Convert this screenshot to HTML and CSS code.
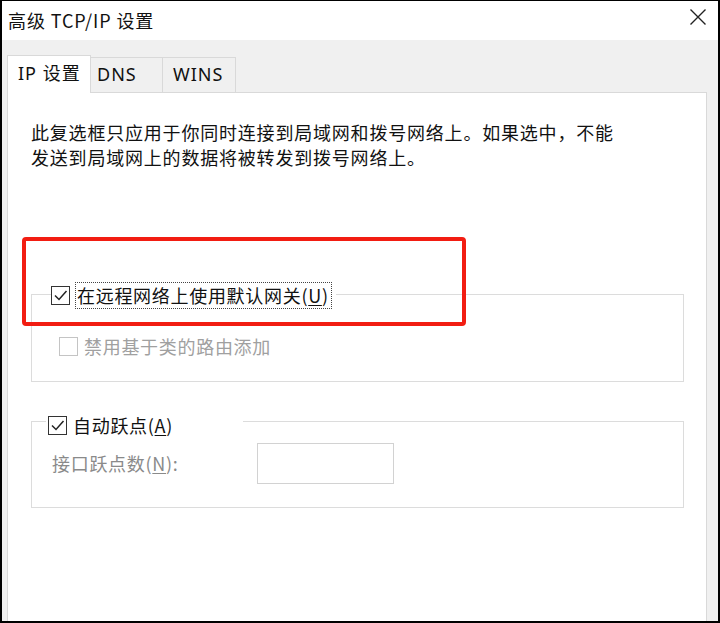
FILE: index.html
```html
<!DOCTYPE html>
<html lang="zh-CN">
<head>
<meta charset="utf-8">
<title>高级 TCP/IP 设置</title>
<link rel="stylesheet" href="styles.css">
</head>
<body>
<div class="window">
  <div class="titlebar">
    <span class="title">高级 TCP/IP 设置</span>
    <svg class="close" width="18" height="18" viewBox="0 0 18 18"><path d="M1.5 1.5 L16.5 16.5 M16.5 1.5 L1.5 16.5" stroke="#222" stroke-width="1.4" fill="none"/></svg>
  </div>
  <div class="body">
    <div class="tabs">
      <div class="tab tab-active">IP 设置</div>
      <div class="tab tab-dns">DNS</div>
      <div class="tab tab-wins">WINS</div>
    </div>
    <div class="panel">
      <p class="note">此复选框只应用于你同时连接到局域网和拨号网络上。如果选中，不能<br>发送到局域网上的数据将被转发到拨号网络上。</p>
      <fieldset class="group group-gateway">
        <legend class="legend legend-gateway">
          <span class="check"><svg width="19" height="19" viewBox="0 0 19 19"><path d="M4 9.5 L8 13.5 L15.5 5" stroke="#222" stroke-width="1.5" fill="none"/></svg></span>
          <span class="focus-label">在远程网络上使用默认网关(<u>U</u>)</span>
        </legend>
        <div class="row row-disabled">
          <span class="check check-disabled"></span>
          <span class="label-disabled">禁用基于类的路由添加</span>
        </div>
      </fieldset>
      <fieldset class="group group-metric">
        <legend class="legend legend-metric">
          <span class="check"><svg width="19" height="19" viewBox="0 0 19 19"><path d="M4 9.5 L8 13.5 L15.5 5" stroke="#222" stroke-width="1.5" fill="none"/></svg></span>
          <span class="legend-text">自动跃点(<u>A</u>)</span>
        </legend>
        <div class="metric-row">
          <span class="metric-label">接口跃点数(<u>N</u>):</span>
          <span class="metric-input"></span>
        </div>
      </fieldset>
    </div>
  </div>
  <div class="highlight"></div>
</div>
</body>
</html>
```

FILE: styles.css
```css
html, body {
  margin: 0;
  padding: 0;
}
body {
  width: 720px;
  height: 623px;
  overflow: hidden;
  background: #fff;
  font-family: "Noto Sans", "Noto Sans CJK SC", sans-serif;
  color: #111;
}
.window {
  position: relative;
  box-sizing: border-box;
  width: 720px;
  height: 623px;
  border: 2px solid #000;
  border-top-width: 1px;
  display: flex;
  flex-direction: column;
  overflow: hidden;
}
.titlebar {
  height: 39px;
  flex: none;
  background: #fff;
  display: flex;
  align-items: center;
  justify-content: space-between;
  padding: 0 12px 0 6px;
}
.title {
  font-family: "Noto Sans CJK SC", sans-serif;
  font-size: 18px;
  letter-spacing: 0.9px;
  color: #111;
  line-height: 24px;
  margin-top: -2px;
}
.close {
  display: block;
  margin-top: -8px;
  margin-right: -1px;
}
.body {
  flex: 1;
  background: #f0f0f0;
  display: flex;
  flex-direction: column;
  padding: 15px 11px 0 5px;
  min-height: 0;
}
.tabs {
  display: flex;
  align-items: flex-end;
  margin-bottom: -1px;
  position: relative;
  z-index: 1;
}
.tab {
  box-sizing: border-box;
  height: 36px;
  border: 1px solid #d9d9d9;
  border-left: none;
  background: #f0f0f0;
  font-size: 18px;
  letter-spacing: 1px;
  line-height: 33px;
  color: #111;
  font-family: "Noto Sans", "Noto Sans CJK SC", sans-serif;
}
.tab-active {
  height: 38px;
  width: 84px;
  border-left: 1px solid #d9d9d9;
  border-bottom: none;
  background: #fff;
  padding-left: 10px;
  line-height: 34px;
}
.tab-dns {
  width: 72px;
  padding-left: 6px;
}
.tab-wins {
  width: 73px;
  padding-left: 10px;
}
.panel {
  flex: 1;
  background: #fff;
  border: 1px solid #d9d9d9;
  border-bottom: none;
  padding: 27px 22px 0 23px;
}
.note {
  margin: 0;
  font-family: "Noto Sans CJK SC", sans-serif;
  font-size: 18px;
  letter-spacing: 0.8px;
  line-height: 25px;
  color: #111;
}
.group {
  box-sizing: border-box;
  width: 653px;
  margin: 0;
  padding: 0;
  border: 1px solid #dcdcdc;
  min-width: 0;
}
.group-gateway {
  margin-top: 109px;
  padding: 25px 0 22px 0;
}
.group-metric {
  margin-top: 22px;
  padding: 5px 0 23px 0;
}
.legend {
  display: flex;
  align-items: center;
  background: #fff;
  font-family: "Noto Sans CJK SC", sans-serif;
  font-size: 18px;
  letter-spacing: 0.7px;
  color: #111;
}
.legend-gateway {
  margin-left: 19px;
  padding: 3px 4px 0 0;
}
.legend-metric {
  margin-left: 14px;
  padding: 9px 0 0 2px;
  width: 197px;
  box-sizing: border-box;
  height: 34px;
}
.check {
  box-sizing: border-box;
  width: 19px;
  height: 19px;
  border: 1.5px solid #333;
  background: #fff;
  display: inline-flex;
  align-items: center;
  justify-content: center;
  flex: none;
}
.check svg {
  display: block;
  margin: -1.5px;
}
.check-disabled {
  border-color: #c4c4c4;
}
.focus-label {
  margin-left: 5px;
  border: 1px dotted #444;
  padding: 0 2px 0 1px;
  line-height: 25px;
}
.legend-text {
  margin-left: 6px;
  line-height: 25px;
}
u {
  text-decoration-thickness: 1px;
  text-underline-offset: 2px;
}
.row {
  display: flex;
  align-items: center;
  height: 25px;
  margin-left: 27px;
  font-family: "Noto Sans CJK SC", sans-serif;
  font-size: 18px;
  letter-spacing: 0.7px;
}
.label-disabled {
  margin-left: 6px;
  color: #a0a0a0;
  line-height: 25px;
}
.metric-row {
  display: flex;
  align-items: center;
  margin-left: 20px;
  font-family: "Noto Sans CJK SC", sans-serif;
  font-size: 18px;
  letter-spacing: 0.7px;
}
.metric-label {
  width: 205px;
  color: #8a8a8a;
  line-height: 25px;
}
.metric-input {
  box-sizing: border-box;
  width: 137px;
  height: 41px;
  border: 1.5px solid #d2d2d2;
  background: #fff;
}
.highlight {
  position: absolute;
  left: 20px;
  top: 236px;
  width: 444px;
  height: 89px;
  box-sizing: border-box;
  border: 4px solid #f21d12;
  border-radius: 4px;
  pointer-events: none;
}
```
